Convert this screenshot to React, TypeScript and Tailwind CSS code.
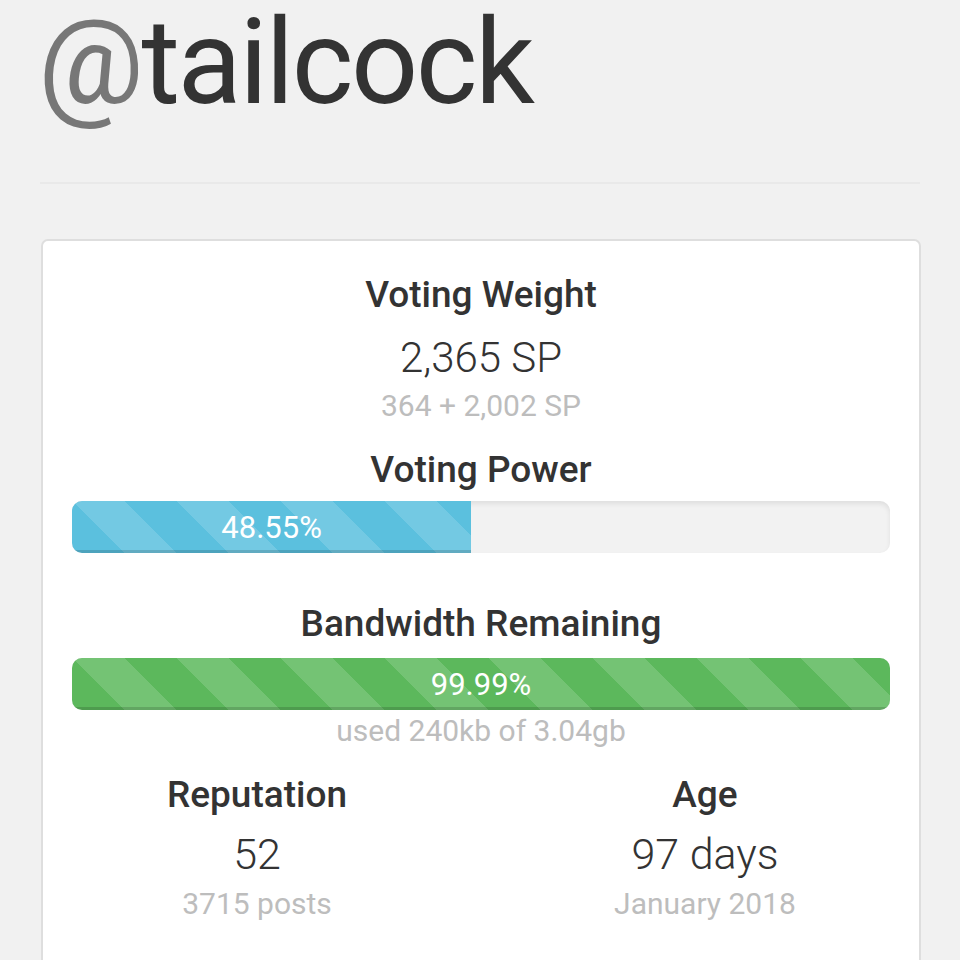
import type { ReactNode } from "react";

type BarProps = {
    percent: number;
    label: string;
    color: "blue" | "green";
};

const stripes =
    "bg-[linear-gradient(45deg,rgba(255,255,255,.15)_25%,transparent_25%,transparent_50%,rgba(255,255,255,.15)_50%,rgba(255,255,255,.15)_75%,transparent_75%,transparent)] bg-[length:104px_104px]";

function ProgressBar({ percent, label, color }: BarProps) {
    const fill = color === "blue" ? "bg-[#5bc0de]" : "bg-[#5cb85c]";
    return (
        <div className="h-[52px] w-full rounded-[10px] bg-[#f2f2f2] shadow-[inset_0_3px_5px_rgba(0,0,0,0.08)] overflow-hidden flex">
            <div
                className={`${fill} ${stripes} h-full flex items-center justify-center text-white text-[31px] leading-none shadow-[inset_0_-3px_0_rgba(0,0,0,0.15)]`}
                style={{ width: `${percent}%` }}
            >
                {label}
            </div>
        </div>
    );
}

function Heading({ children, className = "" }: { children: ReactNode; className?: string }) {
    return (
        <div className={`text-[37px] leading-[40px] font-medium text-[#333] ${className}`}>
            {children}
        </div>
    );
}

function Muted({ children, className = "" }: { children: ReactNode; className?: string }) {
    return (
        <div className={`text-[30px] leading-[32px] text-[#bdbdbd] ${className}`}>{children}</div>
    );
}

export default function App() {
    return (
        <div className="min-h-screen h-[960px] overflow-hidden bg-[#f1f1f1] font-['Roboto',sans-serif]">
            {/* Account name */}
            <header className="pl-[38px] pt-[3px] h-[182px]">
                <h1 className="text-[118px] leading-[120px] font-normal text-[#333] tracking-[-2.5px]">
                    <span className="text-[#777]">@</span>tailcock
                </h1>
            </header>
            <div className="mx-[40px] h-[2px] bg-[#e9e9e9]" />

            {/* Stats card */}
            <section className="ml-[41px] mt-[55px] w-[880px] rounded-[7px] border-2 border-[#dedede] bg-white px-[29px] pt-[34px] pb-[80px] text-center">
                <Heading>Voting Weight</Heading>
                <div className="mt-[18px] text-[42px] leading-[50px] font-light text-[#333]">2,365 SP</div>
                <Muted className="mt-[7px]">364 + 2,002 SP</Muted>

                <Heading className="mt-[28px]">Voting Power</Heading>
                <div className="mt-[11px]">
                    <ProgressBar percent={48.8} label="48.55%" color="blue" />
                </div>

                <Heading className="mt-[51px]">Bandwidth Remaining</Heading>
                <div className="mt-[14px]">
                    <ProgressBar percent={100} label="99.99%" color="green" />
                </div>
                <Muted className="mt-[5px]">used 240kb of 3.04gb</Muted>

                <div className="mt-[28px] flex justify-center gap-[148px]">
                    <div className="w-[300px]">
                        <Heading>Reputation</Heading>
                        <div className="mt-[14px] text-[43px] leading-[50px] font-light text-[#333]">52</div>
                        <Muted className="mt-[9px]">3715 posts</Muted>
                    </div>
                    <div className="w-[300px]">
                        <Heading>Age</Heading>
                        <div className="mt-[14px] text-[43px] leading-[50px] font-light text-[#333]">97 days</div>
                        <Muted className="mt-[9px]">January 2018</Muted>
                    </div>
                </div>
            </section>
        </div>
    );
}
